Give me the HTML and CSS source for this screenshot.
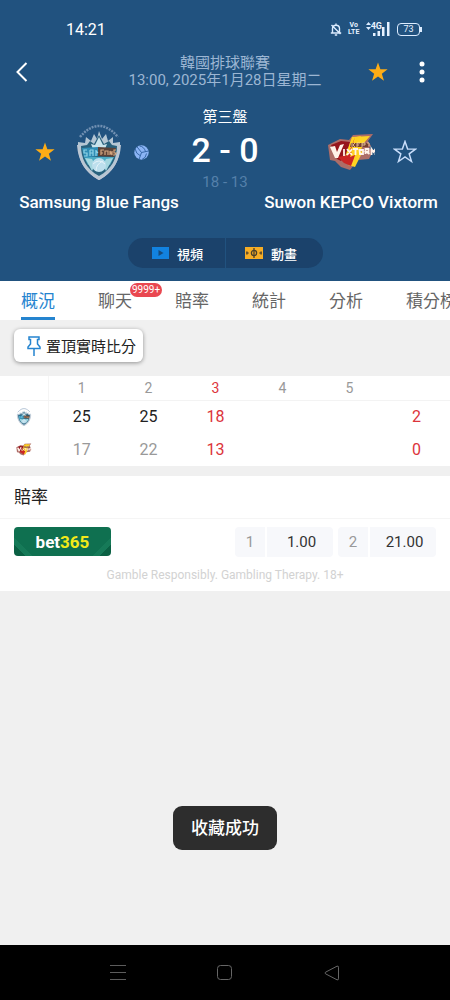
FILE: index.html
```
<!DOCTYPE html>
<html lang="zh-Hant">
<head>
    <meta charset="UTF-8">
    <meta name="viewport" content="width=device-width, initial-scale=1.0">
    <title>Samsung Blue Fangs - Suwon KEPCO Vixtorm</title>
    <link rel="stylesheet" href="styles.css">
</head>
<body>
    <!-- Shared icons -->
    <svg class="symbols" aria-hidden="true">
        <symbol id="star" viewBox="0 0 24 24">
            <path d="M12 1.5l2.6 7.4 7.9.2-6.3 4.8 2.3 7.6-6.5-4.5-6.5 4.5 2.3-7.6L1.500 9.100l7.900-.2z"/>
        </symbol>
        <symbol id="fangs" viewBox="0 0 44 56">
            <path d="M3 13Q22-9 41 13" fill="none" stroke="#7190b2" stroke-width="2.500" stroke-dasharray="2 1"/>
            <path d="M1 18l7 1 1-6 5 4 3-7 3 5 2-8 3 8 4-5 2 7 5-4 0 6 7-1c1 16-5 29-21 38C6 47 0 34 1 18z" fill="#b4c6d4"/>
            <path d="M4 22l6-1 3-4 4 3 5-9 5 9 5-3 3 4 5 1c0 12-5 23-18 30C9 45 4 34 4 22z" fill="#28617d"/>
            <path d="M14 20l4 1 4-8 4 8 4-1-2 5H16z" fill="#c9e4ec"/>
            <path d="M7 33h30l-4 8-6-3-5 6-5-6-6 3z" fill="#4babc4"/>
            <path d="M8 34l7 1 3 6-3 6zM36 34l-7 1-3 6 3 6z" fill="#a5d7e0"/>
            <path d="M5 24l16-1v9L7 34z" fill="#2f8db5"/>
            <path d="M21 23l18 1-2 9-16-1z" fill="#5a4238"/>
            <path d="M10 26H7v3h3v3H7m6-6v6m0-3h3m0 3v-6h-3m6 0v6m0-5l2 2" fill="none" stroke="#8fd3e6" stroke-width="1.200"/>
            <path d="M24 31v-5h3m-3 3h2m2 2v-4h3v4m2 0v-4l2 4v-4m4-1h-2v3h2l-1 2h-2" fill="none" stroke="#d3a57f" stroke-width="1.200"/>
            <circle cx="22" cy="41" r="7" fill="#bddfed"/>
            <path d="M16 40q6-6 12 0M19 47q0-7 7-10" fill="none" stroke="#e4f3f9"/>
            <path d="M1 21c1 14 6 26 21 34 15-8 20-20 21-34" fill="none" stroke="#bcc6d3" stroke-width="2"/>
        </symbol>
        <symbol id="vixtorm" viewBox="0 0 48 38">
            <path d="M1 12l12-6 9 1 4-5 20-1-5 7 3 5-2 2 4 3-4 8-11 1-8 10-9-3-6-6-5-1z" fill="#ad6d68"/>
            <path d="M4 12l10-4 9 1-2 9-7 10-4-2z" fill="#96151d"/>
            <path d="M25 4l18-1-6 7-6 9 5-1-8 16-7-2 2-8-5 1 2-7z" fill="#ffd424"/>
            <path d="M28 4l-5 16 8-5-7 18-7-3-6-6 10-2z" fill="#cb2524"/>
            <path d="M34 3l-4 8 7-1-10 22 1-10-5 2 6-20z" fill="#ffd020"/>
            <path d="M24 10h18l-1 4H23z" fill="#77402f"/>
            <path d="M25 10v4m3-4l-2 2 2 2m2 0v-4h3m-3 2h2m3 2v-4h3v2h-3m5-2h2v3" fill="none" stroke="#f5d3ab" stroke-width=".8"/>
            <path d="M3 14l5-1 2 6 3-7 4-1-6 14H8z" fill="#fff2e9"/>
            <path d="M17 16v7m3-7l5 6m0-6l-5 6m6-6h5m-2.500 0v6m4-5h3.500v4H33zm6 4v-5h3v3h-2l3 2m2 1v-6l2 3 2-3v6" fill="none" stroke="#fff2e9" stroke-width="1.800"/>
        </symbol>
    </svg>

    <header class="header">
        <div class="status-bar">
            <span class="time">14:21</span>
            <div class="status-icons">
                <svg width="12" height="13" viewBox="0 0 12 13" fill="none" stroke="#dcecff" stroke-width="1.400">
                    <path d="M2.500 10V5.500C2.500 3.500 4 2.200 6 2.200s3.500 1.300 3.500 3.300V10zM6 .5v1.500M.8 10h10.400M4.800 12h2.400M1.500 2l9 9"/>
                </svg>
                <span class="volte"><span>Vo</span><span>LTE</span></span>
                <span class="network">
                    <svg width="5" height="8" viewBox="0 0 5 8" fill="#dcecff"><path d="M0 3l2.500-3L5 3zM0 5h5L2.500 8z"/></svg>
                    <span>4G</span>
                    <svg class="signal" width="17" height="14" viewBox="0 0 17 14" fill="#e6f1ff"><path d="M0 11h2.500v3H0zM4.500 9H7v5H4.500zM9 5h2.500v9H9zM14 0h2.500v14H14z"/></svg>
                </span>
                <span class="battery">73</span>
            </div>
        </div>

        <div class="toolbar">
            <button type="button" class="icon-btn" aria-label="返回">
                <svg width="12" height="20" viewBox="0 0 12 20" fill="none" stroke="#fff" stroke-width="2"><path d="M10.500 1L1.500 10l9 9"/></svg>
            </button>
            <div class="league">
                <h1>韓國排球聯賽</h1>
                <p>13:00, 2025年1月28日星期二</p>
            </div>
            <div class="toolbar-actions">
                <button type="button" class="icon-btn" aria-label="收藏">
                    <svg width="22" height="22" fill="#fdac16"><use href="#star"/></svg>
                </button>
                <button type="button" class="icon-btn" aria-label="更多">
                    <svg width="6" height="22" viewBox="0 0 6 22" fill="#fff"><circle cx="3" cy="3" r="2.500"/><circle cx="3" cy="11" r="2.500"/><circle cx="3" cy="19" r="2.500"/></svg>
                </button>
            </div>
        </div>

        <section class="scoreboard">
            <div class="team home">
                <div class="team-row">
                    <button type="button" class="icon-btn" aria-label="收藏 Samsung Blue Fangs">
                        <svg width="22" height="22" fill="#fdac16"><use href="#star"/></svg>
                    </button>
                    <svg class="crest" width="44" height="56"><use href="#fangs"/></svg>
                    <svg width="15" height="15" viewBox="0 0 15 15" fill="#8bb4f5">
                        <circle cx="7.500" cy="7.500" r="7.200"/>
                        <path d="M7.500 7.500L3 1.800M7.500 7.500L14.500 6M7.500 7.500L5 14.500M5.500 1q4.500.5 6 5.500M1.200 4Q2 9 6 10.500M8 14.500q4-1.500 4.500-6" fill="none" stroke="#2c5f9e" stroke-width=".9"/>
                    </svg>
                </div>
                <h2>Samsung Blue Fangs</h2>
            </div>
            <div class="score">
                <span class="period">第三盤</span>
                <strong>2 - 0</strong>
                <span class="set-score">18 - 13</span>
            </div>
            <div class="team away">
                <div class="team-row">
                    <span></span>
                    <svg class="crest" width="48" height="38"><use href="#vixtorm"/></svg>
                    <button type="button" class="icon-btn" aria-label="收藏 Suwon KEPCO Vixtorm">
                        <svg width="24" height="24" fill="none" stroke="#c8ddfa" stroke-width="1.500"><use href="#star"/></svg>
                    </button>
                </div>
                <h2>Suwon KEPCO Vixtorm</h2>
            </div>
        </section>

        <div class="media">
            <button type="button">
                <svg width="17" height="12" viewBox="0 0 17 12"><path fill="#1282df" d="M0 0h17v12H0z"/><path fill="#174b7c" d="M6.500 3l5 3-5 3z"/></svg>
                視頻
            </button>
            <button type="button">
                <svg width="18" height="12" viewBox="0 0 18 12"><path fill="#f6ad25" d="M0 0h18v12H0z"/><g fill="none" stroke="#493f2b" stroke-width="1.300"><circle cx="9" cy="6" r="2.600"/><path d="M9 1v10"/></g><path fill="#6b5328" d="M1 4.500h1.500L4 6 2.500 7.500H1zM17 4.500h-1.500L14 6l1.500 1.500H17z"/></svg>
                動畫
            </button>
        </div>
    </header>

    <nav class="tabs">
        <a href="#" class="active">概況</a>
        <a href="#">聊天<span class="badge">9999+</span></a>
        <a href="#">賠率</a>
        <a href="#">統計</a>
        <a href="#">分析</a>
        <a href="#">積分榜</a>
    </nav>

    <main>
        <button type="button" class="pin-btn">
            <svg width="14" height="20" viewBox="0 0 14 20" fill="none" stroke="#2584cf" stroke-width="1.500"><path d="M2 1h10v2.500h-1.500V8l2.500 3v1.500H1V11l2.500-3V3.500H2zM7 12.500V20"/></svg>
            置頂實時比分
        </button>

        <table class="sets">
            <thead>
                <tr>
                    <th class="team-col"></th>
                    <th>1</th>
                    <th>2</th>
                    <th class="live">3</th>
                    <th>4</th>
                    <th>5</th>
                    <th></th>
                </tr>
            </thead>
            <tbody>
                <tr class="winner">
                    <td class="team-col"><svg width="16" height="18"><use href="#fangs"/></svg></td>
                    <td>25</td>
                    <td>25</td>
                    <td class="live">18</td>
                    <td></td>
                    <td></td>
                    <td class="live">2</td>
                </tr>
                <tr>
                    <td class="team-col"><svg width="16" height="13"><use href="#vixtorm"/></svg></td>
                    <td>17</td>
                    <td>22</td>
                    <td class="live">13</td>
                    <td></td>
                    <td></td>
                    <td class="live">0</td>
                </tr>
            </tbody>
        </table>

        <section class="odds">
            <h3>賠率</h3>
            <div class="odds-row">
                <a href="#" class="bookmaker"><span>bet</span><span class="yellow">365</span></a>
                <div class="odds-values">
                    <button type="button" class="odd"><span class="pick">1</span><span class="price">1.00</span></button>
                    <button type="button" class="odd"><span class="pick">2</span><span class="price">21.00</span></button>
                </div>
            </div>
            <p class="disclaimer">Gamble Responsibly. Gambling Therapy. 18+</p>
        </section>

        <div class="toast" role="status">收藏成功</div>
    </main>

    <footer class="system-nav">
        <button type="button" class="icon-btn" aria-label="選單">
            <svg width="16" height="16" viewBox="0 0 16 16" fill="none" stroke="#5c5c5c"><path d="M0 .5h16M0 7.500h16M0 14.500h16"/></svg>
        </button>
        <button type="button" class="icon-btn" aria-label="主畫面">
            <svg width="16" height="16" viewBox="0 0 16 16" fill="none" stroke="#666"><rect x=".5" y=".5" width="14" height="14" rx="3"/></svg>
        </button>
        <button type="button" class="icon-btn" aria-label="上一頁">
            <svg width="16" height="16" viewBox="0 0 16 16" fill="none" stroke="#666" stroke-linejoin="round"><path d="M1.500 7.200L13 1.200q1.500-.5 1.500 1v11.600q0 1.500-1.500 1L1.500 8.800q-1-.8 0-1.600z"/></svg>
        </button>
    </footer>
</body>
</html>
```
FILE: styles.css
```
* {
    box-sizing: border-box;
}

body {
    margin: 0;
    min-height: 100vh;
    display: flex;
    flex-direction: column;
    overflow-x: hidden;
    background-color: #f0f0f0;
    color: #222;
    font-family: Roboto, "Noto Sans CJK TC", sans-serif;
    font-size: 16px;
}

h1, h2, h3, p {
    margin: 0;
    font-weight: normal;
}

button {
    font-family: inherit;
    border: none;
    padding: 0;
    cursor: pointer;
}

a {
    color: inherit;
    text-decoration: none;
}

svg {
    display: block;
    flex-shrink: 0;
}

.symbols {
    position: absolute;
    width: 0;
    height: 0;
}

.icon-btn {
    display: flex;
    background: none;
}

/* Header */
.header {
    background-color: #21527f;
    color: #fff;
    padding-bottom: 13px;
}

.status-bar {
    display: flex;
    justify-content: space-between;
    align-items: center;
    height: 54px;
    padding: 4px 30px 0 66px;
}

.time {
    font-size: 16px;
}

.status-icons {
    display: flex;
    align-items: center;
    gap: 7px;
    color: #e6f1ff;
}

.volte {
    display: flex;
    flex-direction: column;
    align-items: center;
    width: 10px;
    font-size: 7px;
    line-height: 7px;
    font-weight: bold;
}

.network {
    display: flex;
    align-items: flex-start;
    font-size: 9px;
    line-height: 8px;
    font-weight: bold;
}

.signal {
    margin-left: -9px;
}

.battery {
    position: relative;
    width: 23px;
    height: 13px;
    border: 1px solid #dcecff;
    border-radius: 4px;
    font-size: 9px;
    line-height: 11px;
    text-align: center;
}

.battery::after {
    content: "";
    position: absolute;
    top: 3px;
    right: -3px;
    width: 2px;
    height: 5px;
    background-color: #dcecff;
}

.toolbar {
    display: grid;
    grid-template-columns: 1fr auto 1fr;
    align-items: center;
    height: 36px;
    padding: 0 16px;
}

.league {
    text-align: center;
    color: #9cb6d3;
    font-size: 15px;
    line-height: 17px;
    white-space: nowrap;
}

.league h1 {
    font-size: 15px;
}

.toolbar-actions {
    display: flex;
    justify-content: flex-end;
    gap: 30px;
    padding-right: 9px;
}

.scoreboard {
    display: grid;
    grid-template-columns: 1fr 66px 1fr;
    margin-top: 16px;
}

.home {
    padding-left: 6px;
}

.away {
    padding-right: 6px;
}

.team-row {
    display: grid;
    grid-template-columns: 1fr auto 1fr;
    align-items: center;
    height: 60px;
    margin-top: 16px;
}

.home .icon-btn {
    justify-self: end;
    margin-right: 21px;
}

.home .crest + svg {
    margin-left: 13px;
}

.away .icon-btn {
    margin-left: 18px;
}

.team h2 {
    display: flex;
    justify-content: center;
    margin-top: 10px;
    font-size: 17px;
    line-height: 21px;
    font-weight: 500;
    white-space: nowrap;
}

.score {
    display: flex;
    flex-direction: column;
    align-items: center;
    white-space: nowrap;
}

.period {
    font-size: 15px;
    line-height: 22px;
}

.score strong {
    font-size: 34px;
    line-height: 44px;
    font-weight: 500;
}

.set-score {
    font-size: 15px;
    line-height: 20px;
    color: #5580aa;
}

.media {
    display: flex;
    justify-content: center;
    gap: 1px;
    margin-top: 25px;
}

.media button {
    display: flex;
    align-items: center;
    justify-content: center;
    gap: 8px;
    width: 97px;
    height: 30px;
    background-color: #1b426b;
    color: #fff;
    font-size: 13px;
    font-weight: 500;
}

.media button:first-child {
    padding-left: 3px;
    border-radius: 15px 0 0 15px;
}

.media button:last-child {
    padding-right: 6px;
    border-radius: 0 15px 15px 0;
}

/* Tabs */
.tabs {
    display: flex;
    gap: 43px;
    padding-left: 21px;
    overflow: hidden;
    background-color: #fff;
    color: #666;
    white-space: nowrap;
}

.tabs a {
    position: relative;
    flex-shrink: 0;
    height: 39px;
    line-height: 41px;
    font-size: 17px;
    border-bottom: 3px solid transparent;
}

.tabs .active {
    color: #2584cf;
    border-color: #2584cf;
}

.badge {
    position: absolute;
    top: 2px;
    left: 32px;
    padding: 0 2px;
    border-radius: 7px;
    background-color: #e94750;
    color: #fff;
    font-size: 10px;
    line-height: 14px;
}

/* Content */
main {
    position: relative;
    flex: 1;
}

.pin-btn {
    display: flex;
    align-items: center;
    gap: 5px;
    height: 33px;
    margin: 9px 14px 14px;
    padding: 0 7px 0 13px;
    border-radius: 6px;
    background-color: #fff;
    box-shadow: 0 1px 4px rgba(0,0,0,0.4);
    color: #222;
    font-size: 15px;
}

.sets {
    width: 100%;
    table-layout: fixed;
    border-collapse: collapse;
    background-color: #fff;
    color: #999;
    text-align: center;
}

.sets th {
    height: 24px;
    padding: 0;
    border-bottom: 1px solid #f3f3f3;
    font-size: 14px;
    font-weight: normal;
}

.sets td {
    height: 33px;
    padding: 0;
}

.sets .team-col {
    width: 48px;
    border-right: 1px solid #f5f5f5;
}

.team-col svg {
    margin: 0 auto;
}

.winner {
    color: #222;
}

.sets .live {
    color: #dc343b;
}

.odds {
    margin-top: 10px;
    background-color: #fff;
}

.odds h3 {
    padding: 0 14px;
    font-size: 17px;
    line-height: 42px;
    border-bottom: 1px solid #f5f5f5;
}

.odds-row {
    display: flex;
    justify-content: space-between;
    padding: 8px 14px;
}

.bookmaker {
    display: flex;
    align-items: center;
    justify-content: center;
    width: 97px;
    height: 29px;
    border-radius: 4px;
    background: linear-gradient(45deg, #0a6043 8px, #167a58 8px, #167a58 13px, transparent 13px),
        linear-gradient(-45deg, #0a6043 8px, #167a58 8px, #167a58 13px, #0f7050 13px);
    color: #fff;
    font-size: 17px;
    font-weight: bold;
}

.yellow {
    color: #f3ea19;
}

.odds-values {
    display: flex;
    gap: 5px;
}

.odd {
    display: flex;
    width: 98px;
    border-radius: 4px;
    background-color: #f7f8fb;
    font-size: 15px;
    line-height: 30px;
}

.pick {
    width: 32px;
    border-right: 2px solid #fff;
    color: #999;
}

.price {
    flex: 1;
    padding-left: 3px;
    color: #333;
}

.disclaimer {
    padding-bottom: 6px;
    color: #d2d2d2;
    font-size: 12px;
    line-height: 20px;
    text-align: center;
}

.toast {
    position: absolute;
    bottom: 95px;
    left: 50%;
    transform: translateX(-50%);
    padding: 0 18px;
    border-radius: 9px;
    background-color: #2d2d2d;
    color: #fff;
    font-size: 17px;
    line-height: 44px;
    font-weight: 500;
    white-space: nowrap;
}

/* System navigation */
.system-nav {
    display: flex;
    justify-content: space-around;
    align-items: center;
    height: 55px;
    padding: 0 64px;
    background-color: #000;
}
```
